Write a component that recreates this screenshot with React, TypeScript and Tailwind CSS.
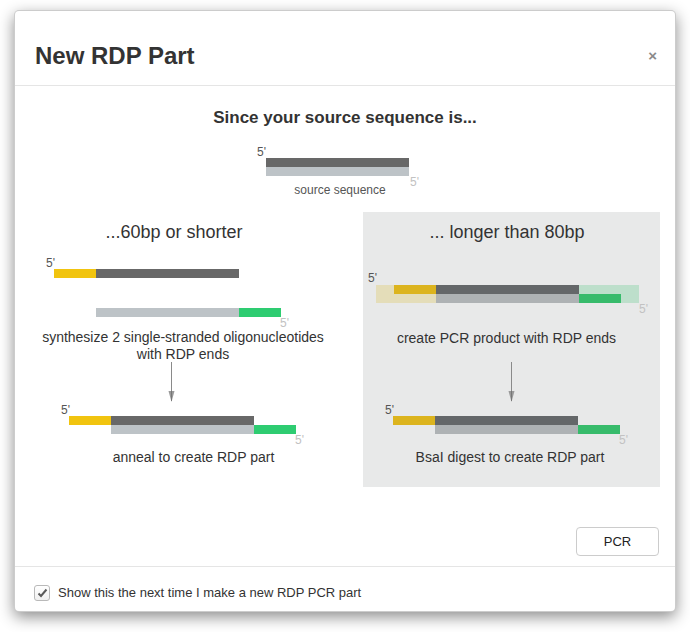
import React from 'react';

// colores de las hebras
const L = { yellow: '#f1c40f', dark: '#686868', grey: '#bdc3c7', green: '#2ecc71' };
const R = { yellow: '#dcb41e', dark: '#646769', grey: '#aeb2b4', green: '#37bb6b', paleY: '#e4ddb9', paleG: '#bddfcb' };

const Prime: React.FC<{ x: number; y: number; light?: boolean }> = ({ x, y, light }) => (
  <text x={x} y={y} fontSize={12} fontFamily="Liberation Sans, Arial, sans-serif" fill={light ? '#c2c2c2' : '#555555'}>
    5'
  </text>
);

const Arrow: React.FC<{ className?: string }> = ({ className }) => (
  <svg width={10} height={40} className={className}>
    <line x1={4.5} y1={0} x2={4.5} y2={38} stroke="#8a8a8a" strokeWidth={1} />
    <polygon points="1.5,29 7.5,29 4.5,40" fill="#9a9a9a" />
    <line x1={4.5} y1={29} x2={4.5} y2={39} stroke="#777" strokeWidth={1} />
  </svg>
);

// hebra doble: 5' arriba, extremos desplazados
const Duplex: React.FC<{ c: typeof L; ox: number; className?: string }> = ({ c, ox, className }) => (
  <svg width={260} height={46} overflow="visible" className={className}>
    <Prime x={ox - 8} y={12} />
    <rect x={ox} y={14} width={42} height={9} fill={c.yellow} />
    <rect x={ox + 42} y={14} width={143} height={9} fill={c.dark} />
    <rect x={ox + 42} y={23} width={143} height={9} fill={c.grey} />
    <rect x={ox + 185} y={23} width={42} height={9} fill={c.green} />
    <Prime x={ox + 226} y={42} light />
  </svg>
);

export default function App() {
  return (
    <div className="w-[690px] h-[632px] bg-white pt-[10px] pl-[14px] font-['Liberation_Sans',Arial,sans-serif] text-[#333]">
      <div className="w-[662px] h-[602px] bg-white border border-black/20 rounded-[5px] shadow-[0_5px_15px_rgba(0,0,0,0.45)] flex flex-col">
        {/* header */}
        <div className="h-[75px] border-b border-[#e5e5e5] pl-5 pr-[18px] pt-[32px] flex justify-between items-start">
          <h4 className="text-[24px] leading-[26px] font-bold text-[#333]">New RDP Part</h4>
          <span className="mt-[4px] text-[15px] leading-[17px] font-bold text-[#8a8a8a]">×</span>
        </div>

        {/* body */}
        <div className="h-[480px] flex flex-col">
          <h4 className="mt-[22px] text-[17px] leading-[20px] font-bold text-center">Since your source sequence is...</h4>

          <div className="ml-[235px] mt-[18px] w-[180px] flex flex-col">
            <svg width={180} height={37} overflow="visible">
              <Prime x={7} y={10} />
              <rect x={16} y={12} width={143} height={9} fill={L.dark} />
              <rect x={16} y={21} width={143} height={9} fill={L.grey} />
              <Prime x={160} y={40} light />
            </svg>
            <p className="text-[12px] leading-[14px] text-center text-[#555]">source sequence</p>
          </div>

          <div className="mt-[15px] flex">
            {/* izquierda */}
            <div className="w-[348px] flex flex-col">
              <h4 className="mt-[10px] w-[318px] text-center text-[18px] leading-[20px]">...60bp or shorter</h4>
              <svg width={260} height={74} overflow="visible" className="mt-[13px] ml-[25px]">
                <Prime x={6} y={12} />
                <rect x={14} y={14} width={42} height={9} fill={L.yellow} />
                <rect x={56} y={14} width={143} height={9} fill={L.dark} />
                <rect x={56} y={53} width={143} height={9} fill={L.grey} />
                <rect x={199} y={53} width={42} height={9} fill={L.green} />
                <Prime x={240} y={72} light />
              </svg>
              <p className="w-[336px] text-center text-[14px] leading-[17px]">
                synthesize 2 single-stranded oligonucleotides
                <br />
                with RDP ends
              </p>
              <Arrow className="-mt-px ml-[152px]" />
              <Duplex c={L} ox={14} className="ml-[40px]" />
              <p className="mt-px ml-[20px] w-[317px] text-center text-[14px] leading-[17px]">anneal to create RDP part</p>
            </div>

            {/* derecha */}
            <div className="w-[297px] h-[275px] bg-[#e8e9e9] flex flex-col">
              <h4 className="mt-[10px] w-[288px] text-center text-[18px] leading-[20px]">... longer than 80bp</h4>
              <svg width={297} height={45} overflow="visible" className="mt-[28px]">
                <Prime x={5} y={12} />
                <rect x={13} y={15} width={60} height={18} fill={R.paleY} />
                <rect x={216} y={15} width={60} height={18} fill={R.paleG} />
                <rect x={31} y={15} width={42} height={9} fill={R.yellow} />
                <rect x={73} y={15} width={143} height={9} fill={R.dark} />
                <rect x={73} y={24} width={143} height={9} fill={R.grey} />
                <rect x={216} y={24} width={42} height={9} fill={R.green} />
                <Prime x={276} y={43} light />
              </svg>
              <p className="mt-[15px] w-[287px] text-center text-[14px] leading-[17px]">create PCR product with RDP ends</p>
              <Arrow className="mt-[15px] ml-[144px]" />
              <Duplex c={R} ox={13} className="ml-[17px]" />
              <p className="mt-px w-[294px] text-center text-[14px] leading-[17px]">BsaI digest to create RDP part</p>
            </div>
          </div>

          <div className="mt-[40px] flex justify-end pr-[16px]">
            <button className="w-[83px] h-[29px] rounded-[4px] border border-[#cccccc] bg-white text-[13px] text-[#222]">PCR</button>
          </div>
        </div>

        {/* footer */}
        <div className="flex-1 border-t border-[#e5e5e5] pl-[19px] pt-[18px] flex items-start gap-[8px]">
          <span className="w-[16px] h-[16px] rounded-[3px] border border-[#b9b9b9] bg-gradient-to-b from-white to-[#f0f0f0] flex items-center justify-center">
            <svg width={11} height={10} viewBox="0 0 11 10">
              <path d="M1.5 5.5 L4 8 L9.5 1.5" fill="none" stroke="#5a5a5a" strokeWidth={2} />
            </svg>
          </span>
          <span className="text-[13px] leading-[16px] text-[#333]">Show this the next time I make a new RDP PCR part</span>
        </div>
      </div>
    </div>
  );
}
